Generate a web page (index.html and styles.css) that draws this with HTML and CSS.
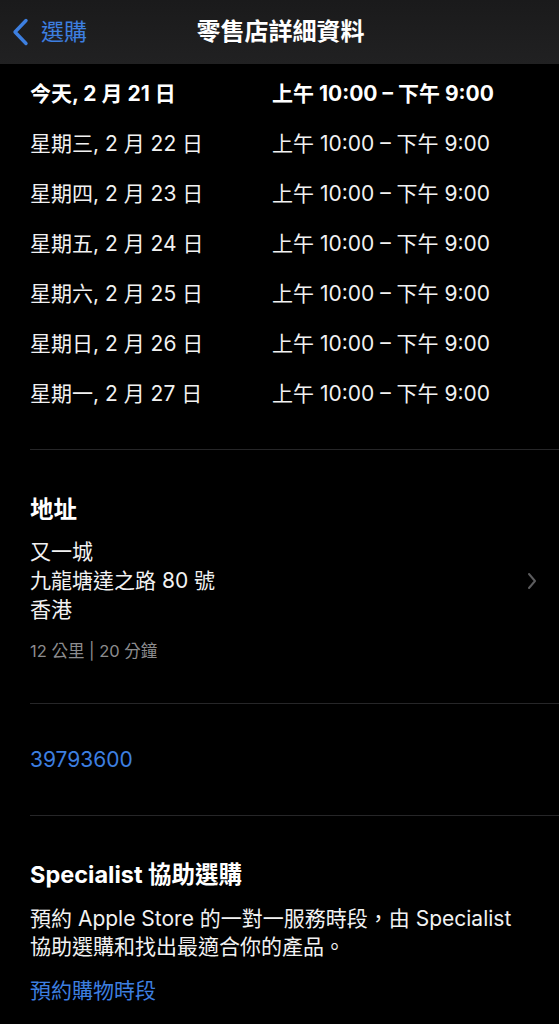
FILE: index.html
```html
<!DOCTYPE html>
<html lang="zh-Hant">
<head>
<meta charset="utf-8">
<link rel="stylesheet" href="styles.css">
</head>
<body>
<header class="nav">
  <a class="back">
    <svg class="back-icon" width="18" height="28" viewBox="0 0 18 28"><path d="M15 2.5 L4 14 L15 25.5" fill="none" stroke="#3d7fe0" stroke-width="3.4" stroke-linecap="round" stroke-linejoin="round"/></svg>
    <span>選購</span>
  </a>
  <h1 class="title">零售店詳細資料</h1>
</header>
<main class="content">
  <section class="hours">
    <div class="row today"><span class="day">今天, 2 月 21 日</span><span class="time">上午 10:00 – 下午 9:00</span></div>
    <div class="row"><span class="day">星期三, 2 月 22 日</span><span class="time">上午 10:00 – 下午 9:00</span></div>
    <div class="row"><span class="day">星期四, 2 月 23 日</span><span class="time">上午 10:00 – 下午 9:00</span></div>
    <div class="row"><span class="day">星期五, 2 月 24 日</span><span class="time">上午 10:00 – 下午 9:00</span></div>
    <div class="row"><span class="day">星期六, 2 月 25 日</span><span class="time">上午 10:00 – 下午 9:00</span></div>
    <div class="row"><span class="day">星期日, 2 月 26 日</span><span class="time">上午 10:00 – 下午 9:00</span></div>
    <div class="row"><span class="day">星期一, 2 月 27 日</span><span class="time">上午 10:00 – 下午 9:00</span></div>
  </section>
  <section class="address">
    <h2 class="heading">地址</h2>
    <div class="addr-row">
      <div class="addr-lines">
        <div>又一城</div>
        <div>九龍塘達之路 80 號</div>
        <div>香港</div>
      </div>
      <svg class="chev" width="10" height="18" viewBox="0 0 10 18"><path d="M2 2 L8 9 L2 16" fill="none" stroke="#5c5c5e" stroke-width="2" stroke-linecap="round" stroke-linejoin="round"/></svg>
    </div>
    <div class="distance">12 公里 | 20 分鐘</div>
  </section>
  <section class="phone">
    <a class="link phone-num">39793600</a>
  </section>
  <section class="specialist">
    <h2 class="heading">Specialist 協助選購</h2>
    <p class="desc">預約 Apple Store 的一對一服務時段，由 Specialist 協助選購和找出最適合你的產品。</p>
    <a class="link">預約購物時段</a>
  </section>
</main>
</body>
</html>
```
FILE: styles.css
```css
* { box-sizing: border-box; margin: 0; padding: 0; }
html, body { background: #000; }
body {
  width: 559px;
  height: 1024px;
  overflow: hidden;
  color: #fff;
  font-family: Inter, "Noto Sans CJK TC", sans-serif;
}
.nav {
  height: 64px;
  background: linear-gradient(180deg, #1a1a1b 0%, #212122 100%);
  display: flex;
  align-items: center;
  justify-content: center;
  position: relative;
}
.back {
  position: absolute;
  left: 11px;
  top: 18px;
  display: flex;
  align-items: center;
  gap: 12px;
  color: #3d7fe0;
  font-size: 23px;
  line-height: 28px;
}
.title {
  font-size: 24px;
  font-weight: 700;
  line-height: 30px;
  margin-left: 2px;
}
.content {
  padding-left: 30px;
}
.hours {
  padding-top: 3px;
  padding-bottom: 32px;
  border-bottom: 1px solid #262628;
}
.row {
  height: 50px;
  display: flex;
  align-items: center;
  font-size: 21px;
  color: #f2f2f2;
}
.row.today { font-weight: 700; color: #fff; }
.day { width: 242px; }
.address {
  padding-top: 45px;
  padding-bottom: 41px;
  border-bottom: 1px solid #262628;
}
.heading {
  font-size: 23.5px;
  font-weight: 700;
  line-height: 30px;
}
.addr-row {
  margin-top: 12px;
  display: flex;
  align-items: center;
  justify-content: space-between;
  padding-right: 22px;
}
.addr-lines {
  font-size: 21px;
  line-height: 29px;
  color: #f2f2f2;
}
.distance {
  margin-top: 16px;
  font-size: 16.5px;
  line-height: 22px;
  color: #8c8c8e;
}
.phone {
  padding-top: 41px;
  padding-bottom: 40px;
  border-bottom: 1px solid #262628;
}
.link {
  display: block;
  color: #3d7fe0;
  font-size: 21px;
  line-height: 30px;
}
.specialist {
  padding-top: 44px;
  padding-bottom: 30px;
}
.desc {
  margin-top: 15px;
  font-size: 21px;
  line-height: 28px;
  color: #f2f2f2;
  padding-right: 30px;
}
.specialist .link { margin-top: 15px; }
```
